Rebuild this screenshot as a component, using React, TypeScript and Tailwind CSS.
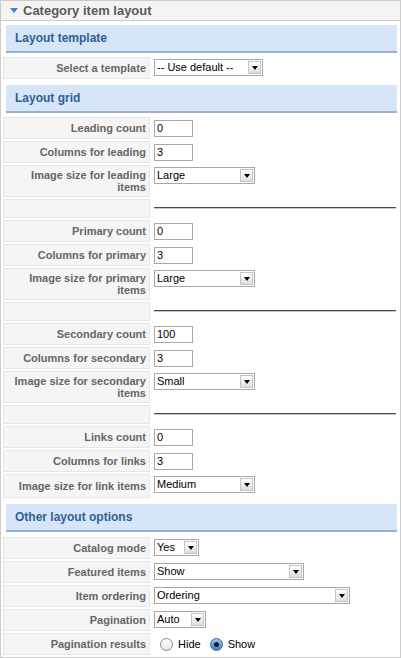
import React from 'react';

type Row =
  | { kind: 'input'; label: string; value: string }
  | { kind: 'select'; label: string; value: string; w: string; h?: string }
  | { kind: 'sep' }
  | { kind: 'radio'; label: string };

type Section = { title: string; gap: string; rows: Row[] };

const group = (name: string, count: string, cols: string, size: string, sizeLabel: string, sep: boolean): Row[] => {
  const rows: Row[] = [
    { kind: 'input', label: `${name} count`, value: count },
    { kind: 'input', label: `Columns for ${name.toLowerCase()}`, value: cols },
    { kind: 'select', label: sizeLabel, value: size, w: 'w-[101px]', h: sep ? 'h-[32px]' : 'h-[24px]' },
  ];
  if (sep) rows.push({ kind: 'sep' });
  return rows;
};

const sections: Section[] = [
  {
    title: 'Layout template',
    gap: 'mb-[2px]',
    rows: [{ kind: 'select', label: 'Select a template', value: '-- Use default --', w: 'w-[109px]' }],
  },
  {
    title: 'Layout grid',
    gap: 'mb-[2px]',
    rows: [
      ...group('Leading', '0', '3', 'Large', 'Image size for leading items', true),
      ...group('Primary', '0', '3', 'Large', 'Image size for primary items', true),
      ...group('Secondary', '100', '3', 'Small', 'Image size for secondary items', true),
      ...group('Links', '0', '3', 'Medium', 'Image size for link items', false),
    ],
  },
  {
    title: 'Other layout options',
    gap: 'mb-[3px]',
    rows: [
      { kind: 'select', label: 'Catalog mode', value: 'Yes', w: 'w-[45px]' },
      { kind: 'select', label: 'Featured items', value: 'Show', w: 'w-[150px]' },
      { kind: 'select', label: 'Item ordering', value: 'Ordering', w: 'w-[196px]' },
      { kind: 'select', label: 'Pagination', value: 'Auto', w: 'w-[52px]' },
      { kind: 'radio', label: 'Pagination results' },
    ],
  },
];

function Select({ value, w }: { value: string; w: string }) {
  return (
    <div className={`${w} h-[17px] flex border border-[#a8a8a8] bg-white`}>
      <span className="flex-1 pl-[2px] text-[11px] leading-[15px] text-black whitespace-nowrap overflow-hidden">{value}</span>
      <span className="w-[13px] my-[1px] mr-[1px] flex items-center justify-center border border-[#c4c4c4] bg-gradient-to-b from-white to-[#dedede]">
        <span className="w-0 h-0 border-l-[3px] border-r-[3px] border-t-[4px] border-l-transparent border-r-transparent border-t-black" />
      </span>
    </div>
  );
}

function Input({ value }: { value: string }) {
  return (
    <div className="w-[39px] h-[17px] border border-[#a8a8a8] bg-white pl-[2px] text-[11px] leading-[15px] text-black">
      {value}
    </div>
  );
}

function Radio({ checked, label }: { checked?: boolean; label: string }) {
  return (
    <span className="flex items-center gap-[5px]">
      {checked ? (
        <span className="w-[13px] h-[13px] rounded-full border border-[#3a68a8] bg-gradient-to-b from-[#9cc4ee] to-[#3d7fd2] flex items-center justify-center">
          <span className="w-[5px] h-[5px] rounded-full bg-[#1c1c1c]" />
        </span>
      ) : (
        <span className="w-[13px] h-[13px] rounded-full border border-[#8a8a8a] bg-gradient-to-b from-white to-[#e6e6e6]" />
      )}
      <span className="text-[11px] text-black">{label}</span>
    </span>
  );
}

function TableRow({ row }: { row: Row }) {
  const h = row.kind === 'sep' ? 'h-[19px]' : row.kind === 'select' && row.h ? row.h : 'h-[22px]';
  return (
    <div className={`flex ${h}`}>
      <div className="w-[147px] shrink-0 flex items-center justify-end bg-[#f5f5f5] border border-[#e6e6e6] pr-[3px] pl-[4px]">
        {row.kind !== 'sep' && (
          <span className="text-[11px] leading-[12px] font-bold text-[#666] text-right">{row.label}</span>
        )}
      </div>
      <div className="flex-1 pl-[3px] pr-[2px] ml-[1px]">
        {row.kind === 'input' && <div className="pt-[3px]"><Input value={row.value} /></div>}
        {row.kind === 'select' && <div className="pt-[2px]"><Select value={row.value} w={row.w} /></div>}
        {row.kind === 'sep' && <div className="mt-[8px] border-t border-[#4a4a4a] border-b border-b-[#c8c8c8]" />}
        {row.kind === 'radio' && (
          <div className="flex items-center gap-[9px] pl-[6px] h-full">
            <Radio label="Hide" />
            <Radio checked label="Show" />
          </div>
        )}
      </div>
    </div>
  );
}

export default function App() {
  return (
    <div className="w-[401px] bg-white font-['Liberation_Sans',Arial,sans-serif]">
      <div className="border border-[#ccc]">
        <div className="h-[20px] bg-[#f4f4f4] border-b border-[#ccc] flex items-center pl-[9px] gap-[5px]">
          <span className="w-0 h-0 border-l-[4px] border-r-[4px] border-t-[5px] border-l-transparent border-r-transparent border-t-[#3a86d0]" />
          <span className="text-[13px] font-bold text-[#5a5a5a]">Category item layout</span>
        </div>
        <div className="px-[2px] pb-[2px] flex flex-col gap-[2px]">
          {sections.map((s) => (
            <React.Fragment key={s.title}>
              <div className={`mt-[4px] ${s.gap} ml-[3px] mr-[1px] h-[28px] bg-[#d6e6f8] border-b-2 border-[#98b1cd] flex items-center pl-[9px]`}>
                <span className="text-[12px] font-bold text-[#2f5f95]">{s.title}</span>
              </div>
              {s.rows.map((r, i) => (
                <TableRow key={i} row={r} />
              ))}
            </React.Fragment>
          ))}
        </div>
      </div>
    </div>
  );
}
